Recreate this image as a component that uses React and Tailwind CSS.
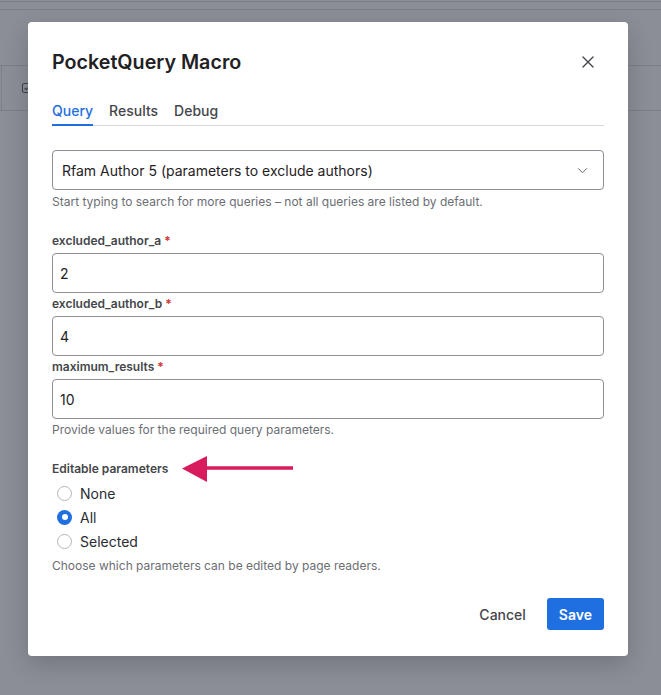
import React, { useState } from "react";

const font = { fontFamily: "Inter, 'Noto Sans', sans-serif" };

const params = [
  { id: "a", label: "excluded_author_a", value: "2" },
  { id: "b", label: "excluded_author_b", value: "4" },
  { id: "m", label: "maximum_results", value: "10" },
];

const options = ["None", "All", "Selected"];

export default function App() {
  const [editable, setEditable] = useState("All");

  return (
    <div className="relative h-[695px] w-[661px] overflow-hidden bg-[#8b8e96]" style={font}>
      {/* page behind the overlay */}
      <div className="h-[2px] border-b border-[#7c7f87]" />
      <div className="h-[8px] border-b border-[#7c7f87]" />
      <div className="h-[55px]" />
      <div className="flex h-[46px] items-center border-y border-[#7c7f87]">
        <div className="h-full w-[2px] border-r border-[#7c7f87]" />
        <div className="ml-[20px] flex h-[10px] w-[10px] items-center justify-center rounded-[2px] border border-[#3f4248]">
          <svg viewBox="0 0 10 10" className="h-2 w-2" fill="none" stroke="#3f4248" strokeWidth="1.4">
            <path d="M2 5l2 2 4-4" />
          </svg>
        </div>
      </div>

      {/* modal */}
      <div className="absolute left-[28px] top-[22px] w-[600px] rounded-[4px] bg-white px-6 pb-[26px] pt-[26px] shadow-[0_8px_24px_rgba(0,0,0,0.18)]">
        <div className="flex items-center justify-between">
          <h1 className="text-[19.7px] font-semibold leading-7 text-[#1f2124]">PocketQuery Macro</h1>
          <button className="mr-[10px] text-[#44464b]">
            <svg viewBox="0 0 12 12" className="h-3 w-3" fill="none" stroke="currentColor" strokeWidth="1.4" strokeLinecap="round">
              <path d="M1 1l10 10M11 1L1 11" />
            </svg>
          </button>
        </div>

        <div className="mt-[25px] flex gap-4 border-b border-[#d6d8dc]">
          <div className="-mb-px border-b-2 border-[#1f6fe0] pb-[3px] text-[14px] font-medium leading-5 text-[#1f6fe0]">Query</div>
          <div className="pb-[3px] text-[14px] font-medium leading-5 text-[#44464b]">Results</div>
          <div className="pb-[3px] text-[14px] font-medium leading-5 text-[#44464b]">Debug</div>
        </div>

        <div className="mt-6 flex h-10 items-center justify-between rounded-[4px] border border-[#8d9097] pl-[9px] pr-[15px]">
          <span className="text-[14px] text-[#1f2124]">Rfam Author 5 (parameters to exclude authors)</span>
          <svg viewBox="0 0 12 8" className="h-[7px] w-[11px]" fill="none" stroke="#5d6066" strokeWidth="1.1">
            <path d="M1 1.5l5 5 5-5" />
          </svg>
        </div>
        <p className="mt-1 text-[12px] leading-4 text-[#6b6e74]">
          Start typing to search for more queries – not all queries are listed by default.
        </p>

        <div className="mt-[23px]">
          {params.map((p, i) => (
            <div key={p.id} className={i ? "mt-[3px]" : ""}>
              <label className="block text-[12px] font-semibold leading-4 text-[#44464b]">
                {p.label}
                <span className="ml-[3px] text-[#d0312d]">*</span>
              </label>
              <input
                readOnly
                value={p.value}
                className="mt-1 block h-10 w-full rounded-[4px] border border-[#8d9097] px-[7px] text-[14px] text-[#1f2124] outline-none"
              />
            </div>
          ))}
          <p className="mt-[3px] text-[12px] leading-4 text-[#6b6e74]">Provide values for the required query parameters.</p>
        </div>

        <div className="mt-[23px]">
          <div className="flex h-4 items-center">
            <span className="text-[12px] font-semibold leading-4 text-[#44464b]">Editable parameters</span>
            <svg viewBox="0 0 112 26" className="-my-[5px] ml-[14px] h-[26px] w-[112px]">
              <path d="M111 12h-86" stroke="#d81b5c" strokeWidth="3.4" />
              <path d="M0 12.5L25 0v26z" fill="#d81b5c" />
            </svg>
          </div>
          <div className="mt-[4px]">
            {options.map((o) => {
              const on = editable === o;
              return (
                <label key={o} className="flex h-6 cursor-pointer items-center" onClick={() => setEditable(o)}>
                  <span
                    className={
                      on
                        ? "ml-[5px] flex h-[15px] w-[15px] items-center justify-center rounded-full bg-[#1f6fe0]"
                        : "ml-[5px] h-[15px] w-[15px] rounded-full border border-[#b4b7bc] bg-white"
                    }
                  >
                    {on && <span className="h-[6px] w-[6px] rounded-full bg-white" />}
                  </span>
                  <span className="ml-[8px] text-[14px] text-[#2a2c30]">{o}</span>
                </label>
              );
            })}
          </div>
          <p className="mt-[5px] text-[12px] leading-4 text-[#6b6e74]">Choose which parameters can be edited by page readers.</p>
        </div>

        <div className="mt-6 flex items-center justify-end gap-[21px]">
          <button className="h-8 text-[14px] font-medium text-[#44464b]">Cancel</button>
          <button className="h-8 rounded-[3px] bg-[#1f6fe0] px-[12px] text-[14px] font-semibold text-white">Save</button>
        </div>
      </div>
    </div>
  );
}
